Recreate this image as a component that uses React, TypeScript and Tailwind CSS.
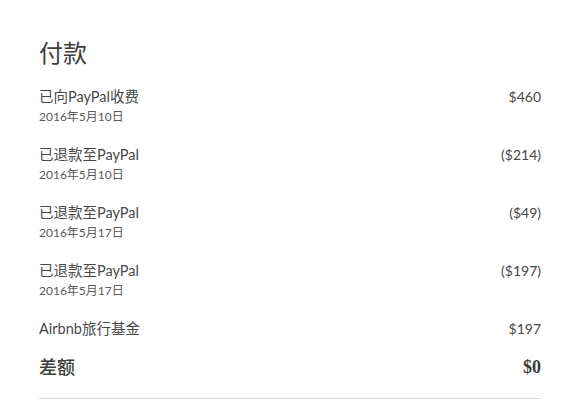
import React from 'react';

const rows = [
  { label: '已向PayPal收费', date: '2016年5月10日', amount: '$460' },
  { label: '已退款至PayPal', date: '2016年5月10日', amount: '($214)' },
  { label: '已退款至PayPal', date: '2016年5月17日', amount: '($49)' },
  { label: '已退款至PayPal', date: '2016年5月17日', amount: '($197)' },
];

const font = { fontFamily: '"Lato", "Noto Sans CJK SC", sans-serif' };

export default function App() {
  return (
    <div className="w-[571px] h-[408px] bg-white text-[#484848] overflow-hidden" style={font}>
      <div className="ml-[39px] w-[502px] pt-[36px]">
        <h1 className="text-[24px] leading-[34px] font-normal text-[#3c3c3c]">付款</h1>

        <div className="mt-[18px] flex flex-col gap-[20px]">
          {rows.map((r, i) => (
            <div key={i} className="flex justify-between items-start">
              <div>
                <div className="text-[14.5px] leading-[18px]">{r.label}</div>
                <div className="mt-[2px] text-[12px] leading-[18px] text-[#5a5a5a]">{r.date}</div>
              </div>
              <div className="text-[14px] leading-[18px]">{r.amount}</div>
            </div>
          ))}
        </div>

        <div className="mt-[20px] flex justify-between leading-[18px]">
          <span className="text-[14.5px]">Airbnb旅行基金</span>
          <span className="text-[14px]">$197</span>
        </div>

        <div className="mt-[18px] flex justify-between items-center">
          <span className="text-[18px] leading-[22px] font-medium text-[#3c3c3c]">差额</span>
          <span className="text-[18px] leading-[22px] font-bold text-[#3c3c3c]" style={{ fontFamily: '"Liberation Serif", serif' }}>$0</span>
        </div>

        <div className="mt-[20px] h-px bg-[#dcdcdc]" />
      </div>
    </div>
  );
}
